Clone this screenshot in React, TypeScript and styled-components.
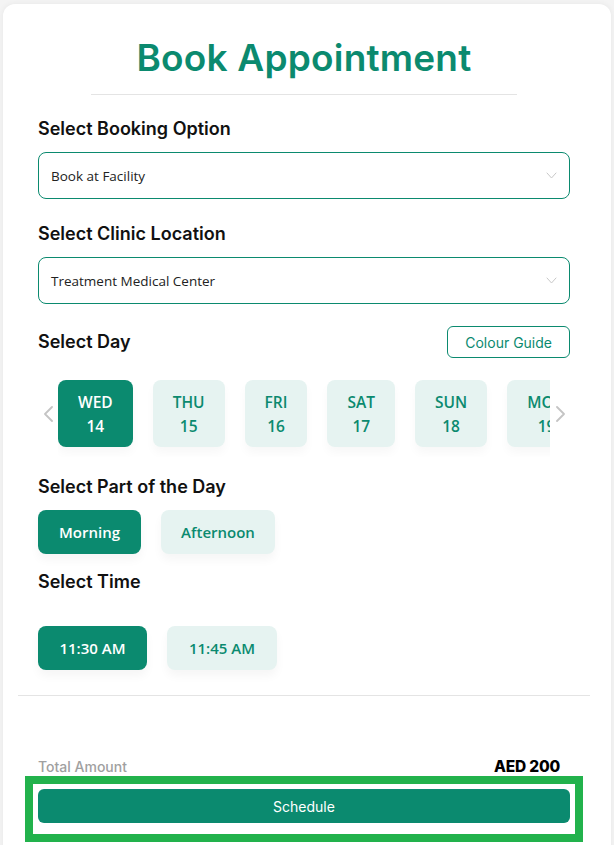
import React, { useState } from 'react';
import styled, { createGlobalStyle } from 'styled-components';

const TEAL = '#0b8a6f';
const TEAL_SOFT = '#e6f3f1';
const HEAD_FONT = `Inter, 'Noto Sans', sans-serif`;
const BODY_FONT = `'Open Sans', 'Noto Sans', sans-serif`;

const GlobalStyle = createGlobalStyle`
  html, body {
    margin: 0;
    padding: 0;
    background: #f4f4f4;
  }
  * {
    box-sizing: border-box;
  }
`;

const Page = styled.div`
  padding: 4px 3px 0 3px;
`;

const Card = styled.div`
  background: #fff;
  border-radius: 12px;
  box-shadow: 0 0 6px rgba(0, 0, 0, 0.06);
  padding: 32px 21px 40px 15px;
  min-height: 900px;
`;

const Section = styled.div`
  padding: 0 20px;
`;

const Title = styled.h1`
  margin: 0;
  font-family: ${HEAD_FONT};
  font-size: 37px;
  line-height: 44px;
  font-weight: 600;
  color: ${TEAL};
  text-align: center;
  letter-spacing: 0.2px;
`;

const TitleRule = styled.hr`
  width: 80%;
  margin: 14px auto 0;
  border: none;
  border-top: 1px solid #e4e4e4;
`;

const Label = styled.h2<{ $top: number }>`
  margin: ${p => p.$top}px 0 0;
  font-family: ${HEAD_FONT};
  font-size: 18px;
  line-height: 24px;
  font-weight: 600;
  color: #111;
`;

const SelectBox = styled.div`
  margin-top: 11px;
  height: 47px;
  border: 1px solid ${TEAL};
  border-radius: 8px;
  display: flex;
  align-items: center;
  justify-content: space-between;
  padding: 0 12px 0 12px;
  font-family: ${BODY_FONT};
  font-size: 13.5px;
  color: #222;
`;

const Chevron = ({ dir, color, w, h }: { dir: 'down' | 'left' | 'right'; color: string; w: number; h: number }) => {
  const d =
    dir === 'down'
      ? `M1 1 L${w / 2} ${h - 1} L${w - 1} 1`
      : dir === 'left'
      ? `M${w - 1} 1 L1 ${h / 2} L${w - 1} ${h - 1}`
      : `M1 1 L${w - 1} ${h / 2} L1 ${h - 1}`;
  return (
    <svg width={w} height={h} viewBox={`0 0 ${w} ${h}`} fill="none">
      <path d={d} stroke={color} strokeWidth={dir === 'down' ? 1 : 1.8} strokeLinecap="round" strokeLinejoin="round" />
    </svg>
  );
};

const DayHeader = styled.div`
  margin-top: 22px;
  display: flex;
  align-items: center;
  justify-content: space-between;
`;

const GuideButton = styled.button`
  height: 32px;
  padding: 0 17px;
  background: #fff;
  border: 1px solid ${TEAL};
  border-radius: 6px;
  font-family: ${HEAD_FONT};
  font-size: 14px;
  color: ${TEAL};
  cursor: pointer;
`;

const DaySlider = styled.div`
  margin-top: 22px;
  display: flex;
  align-items: center;
`;

const ArrowSlot = styled.div`
  width: 20px;
  flex-shrink: 0;
  display: flex;
  justify-content: center;
`;

const DayViewport = styled.div`
  flex: 1;
  overflow: hidden;
  display: flex;
  gap: 20px;
  padding-bottom: 10px;
  margin-bottom: -10px;
`;

const DayCell = styled.button<{ $active?: boolean }>`
  flex-shrink: 0;
  height: 67px;
  padding: 0 20px;
  border: none;
  border-radius: 8px;
  background: ${p => (p.$active ? TEAL : TEAL_SOFT)};
  color: ${p => (p.$active ? '#fff' : TEAL)};
  font-family: ${BODY_FONT};
  font-size: 15.5px;
  font-weight: 600;
  line-height: 24px;
  display: flex;
  flex-direction: column;
  align-items: center;
  justify-content: center;
  box-shadow: 0 6px 10px rgba(0, 0, 0, 0.03);
  cursor: pointer;
`;

const ChipRow = styled.div<{ $top: number }>`
  margin-top: ${p => p.$top}px;
  display: flex;
  gap: 20px;
`;

const Chip = styled.button<{ $active?: boolean; $w: number }>`
  width: ${p => p.$w}px;
  height: 44px;
  border: none;
  border-radius: 8px;
  background: ${p => (p.$active ? TEAL : TEAL_SOFT)};
  color: ${p => (p.$active ? '#fff' : TEAL)};
  font-family: ${BODY_FONT};
  font-size: 15px;
  font-weight: 600;
  box-shadow: 0 6px 10px rgba(0, 0, 0, 0.04);
  cursor: pointer;
`;

const FooterRule = styled.hr`
  margin: 25px 0 0;
  border: none;
  border-top: 1px solid #e4e4e4;
`;

const TotalRow = styled.div`
  margin-top: 60px;
  display: flex;
  align-items: center;
  justify-content: space-between;
  padding-right: 10px;
  height: 20px;
`;

const TotalLabel = styled.span`
  font-family: ${HEAD_FONT};
  font-size: 14px;
  font-weight: 500;
  color: #a0a0a0;
`;

const TotalValue = styled.span`
  font-family: ${HEAD_FONT};
  font-size: 15.5px;
  font-weight: 800;
  color: #000;
  letter-spacing: -0.2px;
`;

const Highlight = styled.div`
  margin: 0 -13px 0 -13px;
  border: 8px solid #22b24c;
  padding: 5px 5px 0 5px;
  height: 66px;
`;

const ScheduleButton = styled.button`
  width: 100%;
  height: 34px;
  border: none;
  border-radius: 6px;
  background: ${TEAL};
  color: #fff;
  font-family: ${HEAD_FONT};
  font-size: 14px;
  cursor: pointer;
`;

const days = [
  { d: 'WED', n: 14 },
  { d: 'THU', n: 15 },
  { d: 'FRI', n: 16 },
  { d: 'SAT', n: 17 },
  { d: 'SUN', n: 18 },
  { d: 'MON', n: 19 },
];

export default function App() {
  const [day, setDay] = useState(14);
  const [part, setPart] = useState('Morning');
  const [time, setTime] = useState('11:30 AM');

  return (
    <Page>
      <GlobalStyle />
      <Card>
        <Title>Book Appointment</Title>
        <Section>
          <TitleRule />
          <Label $top={22}>Select Booking Option</Label>
          <SelectBox>
            <span>Book at Facility</span>
            <Chevron dir="down" color="#c8c8c8" w={11} h={7} />
          </SelectBox>

          <Label $top={23}>Select Clinic Location</Label>
          <SelectBox>
            <span>Treatment Medical Center</span>
            <Chevron dir="down" color="#c8c8c8" w={11} h={7} />
          </SelectBox>

          <DayHeader>
            <Label $top={0}>Select Day</Label>
            <GuideButton>Colour Guide</GuideButton>
          </DayHeader>

          <DaySlider>
            <ArrowSlot>
              <Chevron dir="left" color="#c4c4c4" w={9} h={16} />
            </ArrowSlot>
            <DayViewport>
              {days.map(x => (
                <DayCell key={x.n} $active={day === x.n} onClick={() => setDay(x.n)}>
                  <span>{x.d}</span>
                  <span>{x.n}</span>
                </DayCell>
              ))}
            </DayViewport>
            <ArrowSlot>
              <Chevron dir="right" color="#c4c4c4" w={9} h={16} />
            </ArrowSlot>
          </DaySlider>

          <Label $top={28}>Select Part of the Day</Label>
          <ChipRow $top={11}>
            {[
              ['Morning', 103],
              ['Afternoon', 114],
            ].map(([p, w]) => (
              <Chip key={p} $w={w as number} $active={part === p} onClick={() => setPart(p as string)}>
                {p}
              </Chip>
            ))}
          </ChipRow>

          <Label $top={16}>Select Time</Label>
          <ChipRow $top={32}>
            {[
              ['11:30 AM', 109],
              ['11:45 AM', 110],
            ].map(([t, w]) => (
              <Chip key={t} $w={w as number} $active={time === t} onClick={() => setTime(t as string)}>
                {t}
              </Chip>
            ))}
          </ChipRow>
        </Section>

        <FooterRule />

        <Section>
          <TotalRow>
            <TotalLabel>Total Amount</TotalLabel>
            <TotalValue>AED 200</TotalValue>
          </TotalRow>
          <Highlight>
            <ScheduleButton>Schedule</ScheduleButton>
          </Highlight>
        </Section>
      </Card>
    </Page>
  );
}
